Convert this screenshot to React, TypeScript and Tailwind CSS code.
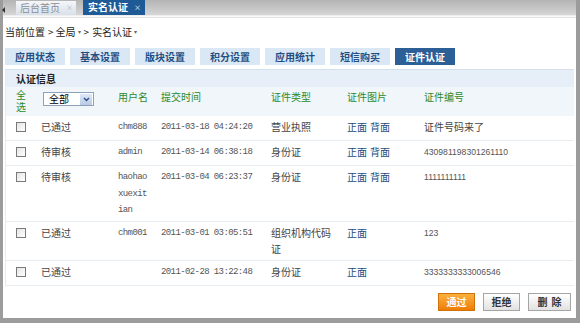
import React from 'react';

const cjk = { fontFamily: '"Noto Sans CJK SC", "Liberation Sans", sans-serif' };
const mono = { fontFamily: '"Liberation Mono", monospace' };

type Row = {
  status: string;
  user: string;
  time: string;
  type: string;
  pics: string[];
  no: string;
};

const rows: Row[] = [
  { status: '已通过', user: 'chm888', time: '2011-03-18 04:24:20', type: '营业执照', pics: ['正面', '背面'], no: '证件号码来了' },
  { status: '待审核', user: 'admin', time: '2011-03-14 06:38:18', type: '身份证', pics: ['正面', '背面'], no: '430981198301261110' },
  { status: '待审核', user: 'haohaoxuexitian', time: '2011-03-04 06:23:37', type: '身份证', pics: ['正面', '背面'], no: '1111111111' },
  { status: '已通过', user: 'chm001', time: '2011-03-01 03:05:51', type: '组织机构代码证', pics: ['正面'], no: '123' },
  { status: '已通过', user: '', time: '2011-02-28 13:22:48', type: '身份证', pics: ['正面'], no: '3333333333006546' },
];

const tabs = ['应用状态', '基本设置', '版块设置', '积分设置', '应用统计', '短信购买', '证件认证'];

const cols = 'grid grid-cols-[35px_77px_43px_110px_76px_77px_1fr]';

function Checkbox() {
  return <div className="mt-[2px] ml-[10px] h-[10px] w-[10px] border border-[#7a7a7a] bg-gradient-to-br from-[#e4e4e4] to-white" />;
}

export default function App() {
  return (
    <div className="w-[580px] h-[323px] bg-[#9c9c9c] pl-[3px] pr-[4px] pb-[5px] overflow-hidden" style={cjk}>
      <div className="h-full bg-white flex flex-col">
        {/* top tab bar */}
        <div className="relative h-[15px] bg-gradient-to-b from-[#b4b4b4] to-[#d6d6d6] flex items-end gap-[7px] pl-[13px]">
          <div className="absolute left-[-1px] top-[7px] h-0 w-0 border-y-[3px] border-y-transparent border-r-[3px] border-r-[#333]" />
          <div className="h-[14px] whitespace-nowrap bg-gradient-to-b from-[#f4f6f9] to-[#d9e1ea] text-[10px] leading-[13px] text-[#8a8f96] pl-[4px] pr-[3px] flex gap-[6px]">
            <span>后台首页</span>
            <span className="text-[7px] text-[#b0b0b0]">×</span>
          </div>
          <div className="h-[15px] whitespace-nowrap bg-[#1e5b96] text-[10px] leading-[14px] text-white font-bold pl-[5px] pr-[4px] flex gap-[6px]">
            <span>实名认证</span>
            <span className="text-[7px] font-normal">×</span>
          </div>
        </div>
        <div className="h-[3px] bg-gradient-to-b from-[#e8e8e8] to-white border-b border-[#e4e4e4]" />

        {/* breadcrumb */}
        <div className="mt-[8px] pl-[2px] text-[10px] leading-[12px] text-[#222] flex items-center whitespace-nowrap">
          <span>当前位置</span>
          <span className="ml-[3px] mr-[2px]">&gt;</span>
          <span>全局</span>
          <span className="text-[6px] text-[#666] ml-[2px] mr-[3px]">▾</span>
          <span className="mr-[3px]">&gt;</span>
          <span>实名认证</span>
          <span className="text-[6px] text-[#666] ml-[2px]">▾</span>
        </div>

        {/* section tabs */}
        <div className="mt-[10px] ml-[2px] flex gap-[5px]">
          {tabs.map((t, i) => (
            <div
              key={t}
              className={
                i === tabs.length - 1
                  ? 'h-[17px] px-[10px] bg-[#2b5f96] text-white text-[10px] leading-[17px] font-bold whitespace-nowrap'
                  : 'h-[17px] px-[10px] bg-[#dae7f4] text-[#1f4f83] text-[10px] leading-[17px] font-bold whitespace-nowrap'
              }
            >
              {t}
            </div>
          ))}
        </div>
        <div className="mt-[4px] mx-[2px] border-t border-[#d4e0ec]" />

        {/* table */}
        <div className="mx-[2px] border-l border-[#e4ebf2]">
          <div className="h-[17px] bg-[#e6eef7] pl-[10px] text-[10px] leading-[17px] font-bold text-[#222]">认证信息</div>
          <div className={`${cols} h-[29px] bg-[#f1f6fb] text-[10px] text-[#2d8a2d] pt-[2px]`}>
            <div className="pl-[10px]">
              <div className="w-[10px] break-all text-[10px] leading-[12px]">全选</div>
            </div>
            <div className="pl-[2px] pt-[3px]">
              <div className="h-[14px] w-[51px] border border-[#8da2b8] bg-white flex items-center justify-between">
                <span className="pl-[5px] text-[10px] text-black leading-[12px]">全部</span>
                <span className="mr-[1px] h-[11px] w-[12px] bg-gradient-to-b from-[#dfe8f5] to-[#b9cbe5] flex items-center justify-center">
                  <svg width="7" height="5" viewBox="0 0 7 5"><path d="M1 1 L3.5 3.5 L6 1" stroke="#2f4f8a" strokeWidth="1.5" fill="none" /></svg>
                </span>
              </div>
            </div>
            <div className="pt-[2px] leading-[12px]">用户名</div>
            <div className="pt-[2px] leading-[12px]">提交时间</div>
            <div className="pt-[2px] leading-[12px]">证件类型</div>
            <div className="pt-[2px] leading-[12px]">证件图片</div>
            <div className="pt-[2px] leading-[12px]">证件编号</div>
          </div>
          {rows.map((r, i) => {
            const numeric = /^\d+$/.test(r.no);
            return (
              <div key={i} className={`${cols} min-h-[25px] pt-[3px] pb-[2px] border-b border-[#e8edf2] text-[10px] leading-[16.5px] text-[#444]`}>
                <div className="pt-[1px]"><Checkbox /></div>
                <div>{r.status}</div>
                <div className="w-[30px] break-all text-[9px] tracking-[-0.6px] text-[#555]" style={mono}>{r.user}</div>
                <div className="text-[9px] tracking-[-0.6px] text-[#555] whitespace-nowrap" style={mono}>{r.time}</div>
                <div className="w-[64px]">{r.type}</div>
                <div className="text-[#1e4c7c] flex gap-[3px]">
                  {r.pics.map(p => <span key={p}>{p}</span>)}
                </div>
                {numeric ? (
                  <div className="text-[8.6px] text-[#555]" style={{ fontFamily: '"Liberation Sans", sans-serif' }}>{r.no}</div>
                ) : (
                  <div>{r.no}</div>
                )}
              </div>
            );
          })}
        </div>

        {/* actions */}
        <div className="mt-[7px] mr-[5px] flex justify-end gap-[8px]">
          <button className="h-[18px] w-[37px] border border-[#d0720a] bg-gradient-to-b from-[#fbb03b] to-[#ee7d00] text-white text-[10px] font-bold leading-[16px]">通过</button>
          <button className="h-[18px] w-[37px] border border-[#a5a5a5] bg-gradient-to-b from-white to-[#e2e2e2] text-[#333] text-[10px] font-bold leading-[16px]">拒绝</button>
          <button className="h-[18px] w-[43px] border border-[#a5a5a5] bg-gradient-to-b from-white to-[#e2e2e2] text-[#333] text-[10px] font-bold leading-[16px] tracking-[4px] pl-[4px]">删除</button>
        </div>
      </div>
    </div>
  );
}
